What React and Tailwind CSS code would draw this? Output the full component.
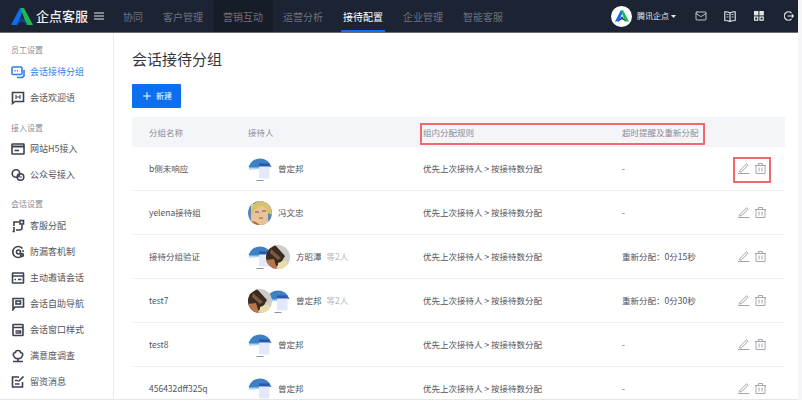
import React from "react";
import { Mail, Plus } from "lucide-react";

const font = { fontFamily: '"Noto Sans CJK SC", "Noto Sans", sans-serif' };

function Logo({ w = 22, h = 17 }) {
  return (
    <svg width={w} height={h} viewBox="0 0 22 17" className="shrink-0">
      <path d="M9 0 H13 L6.5 17 H0 Z" fill="#0c6ff0" />
      <path d="M9.5 0 H13 L22 17 H15.5 Z" fill="#1db954" />
      <path d="M5 17 L11 9 L17 17 L11 13.5 Z" fill="#14408f" />
    </svg>
  );
}

function AvatarBlue() {
  return (
    <svg width="24" height="24" viewBox="0 0 24 24" className="shrink-0">
      <path d="M0.5 10 A12 12 0 0 1 23.5 10 Z" fill="#3f7fc4" />
      <rect x="11" y="6.5" width="10.5" height="3" fill="#2a58ad" />
      <rect x="1" y="10" width="10" height="1.6" fill="#6ab2e4" />
      <rect x="0.5" y="11.6" width="7" height="1.2" fill="#bfe0f5" />
      <rect x="11" y="9.5" width="10.5" height="12" fill="#e3e9f8" />
      <rect x="8.5" y="23.2" width="7" height="0.8" fill="#777" />
    </svg>
  );
}

function AvatarBlond() {
  return (
    <svg width="24" height="24" viewBox="0 0 24 24" className="shrink-0">
      <defs><clipPath id="cb"><circle cx="12" cy="12" r="12" /></clipPath></defs>
      <g clipPath="url(#cb)">
        <rect width="24" height="24" fill="#5b87b5" />
        <rect x="3" y="3" width="17" height="21" fill="#e9c49b" />
        <path d="M3 13 Q3 2 12 0 Q24 0 24 14 L20 12 Q19 7 14 5 Q9 6 7 9 Q5 10 5 14 Z" fill="#d8c268" />
        <path d="M7 11 H11 M14 10 H18" stroke="#6b4a2a" strokeWidth="0.9" />
        <path d="M11 17 H15" stroke="#8a5a3a" strokeWidth="0.9" />
        <path d="M0 19 L8 21 L12 24 H0 Z" fill="#b5702f" />
      </g>
    </svg>
  );
}

function AvatarBrown() {
  return (
    <svg width="24" height="24" viewBox="0 0 24 24" className="shrink-0">
      <defs><clipPath id="cc"><circle cx="12" cy="12" r="12" /></clipPath></defs>
      <g clipPath="url(#cc)">
        <rect width="24" height="24" fill="#cdccc8" />
        <path d="M0 6 L9 0 L19 11 L16 16 L8 24 L0 24 Z" fill="#3b2a20" />
        <path d="M0 15 L8 14 L11 24 L0 24 Z" fill="#b9744a" />
        <path d="M5 4 L15 13 L12 15 L4 8 Z" fill="#7a5a42" />
        <path d="M12 18 L20 15 L24 24 L12 24 Z" fill="#e8dca8" />
      </g>
    </svg>
  );
}

function Av({ type }) {
  if (type === "blue") return <AvatarBlue />;
  if (type === "blond") return <AvatarBlond />;
  return <AvatarBrown />;
}

function SideIcon({ d, blue }) {
  const c = blue ? "#2f80ed" : "#3d4250";
  return (
    <svg width="14" height="14" viewBox="0 0 14 14" fill="none" stroke={c} strokeWidth="1.6" className="shrink-0">
      {d}
    </svg>
  );
}

const icons = {
  chat: (
    <>
      <rect x="1" y="2" width="10" height="7.5" rx="1" />
      <path d="M13 5 V11 L11 12.5 H6" />
      <path d="M3.5 5.7 H8.5" strokeDasharray="1.2 1.2" />
    </>
  ),
  hi: (
    <>
      <path d="M1.5 1.5 H12.5 V10.5 H4 L1.5 12.5 Z" />
      <path d="M5 4 V8 M5 6 H9 M9 4 V8" strokeWidth="1.1" />
    </>
  ),
  web: (
    <>
      <rect x="1" y="2" width="12" height="10" rx="0.5" />
      <path d="M1 4.5 H13" strokeWidth="2" />
      <path d="M3.5 8.5 H8" />
    </>
  ),
  wechat: (
    <>
      <circle cx="5" cy="5.5" r="3.8" />
      <circle cx="9.5" cy="9" r="3.3" />
      <path d="M8 9 H11" strokeWidth="1" />
    </>
  ),
  assign: (
    <>
      <rect x="9" y="1.5" width="3.5" height="3.5" />
      <path d="M8 3 H3 V7 M3 8 V12.5 H1.5 M11 6 V9 Q11 11 8 11 H5" />
    </>
  ),
  guard: (
    <>
      <path d="M11.5 3.5 A5.5 5.5 0 1 0 11.5 10.5" />
      <circle cx="7.5" cy="7" r="2" />
      <circle cx="11" cy="10" r="1.4" />
      <path d="M11 6 H13" />
    </>
  ),
  invite: (
    <>
      <rect x="1.5" y="2" width="11" height="10" rx="0.5" />
      <path d="M1.5 5 H12.5 M7 8.5 H10.5 M3.5 8.5 H5" />
    </>
  ),
  nav: (
    <>
      <path d="M2 1.5 H12.5 V10 H4 L2 12.5 Z" />
      <rect x="5" y="4" width="4.5" height="3" />
    </>
  ),
  style: (
    <>
      <rect x="2" y="1.5" width="10" height="11" rx="0.5" />
      <path d="M2 4.5 H12 M4.5 8 H9.5 V10 H4.5" />
    </>
  ),
  survey: (
    <>
      <path d="M7 1.5 Q9.5 1.5 9.5 3.5 Q12.5 4 11.5 6.5 Q10.5 9 9 9.5 H5 Q3.5 9 2.5 6.5 Q1.5 4 4.5 3.5 Q4.5 1.5 7 1.5 Z" />
      <path d="M2 12.5 H12 M7 9.5 V12.5" />
    </>
  ),
  msg: (
    <>
      <path d="M11.5 7 V12 H1.5 V2 H8" />
      <path d="M4 5.5 H7 M4 9 H8.5 M7.5 6.5 L12.5 1.5" />
    </>
  ),
};

const groups = [
  {
    title: "员工设置",
    gap: "mb-[11px]",
    head: "mb-[3px]",
    items: [
      ["chat", "会话接待分组", true],
      ["hi", "会话欢迎语"],
    ],
  },
  {
    title: "接入设置",
    gap: "mb-[10px]",
    head: "mb-[2px]",
    items: [
      ["web", "网站H5接入"],
      ["wechat", "公众号接入"],
    ],
  },
  {
    title: "会话设置",
    gap: "",
    head: "mb-[3px]",
    items: [
      ["assign", "客服分配"],
      ["guard", "防漏客机制"],
      ["invite", "主动邀请会话"],
      ["nav", "会话自助导航"],
      ["style", "会话窗口样式"],
      ["survey", "满意度调查"],
      ["msg", "留资消息"],
    ],
  },
];

const navs = ["协同", "客户管理", "营销互动", "运营分析", "接待配置", "企业管理", "智能客服"];

const rows = [
  { name: "b侧未响应", avs: ["blue"], who: "曾定邦", time: "-", boxed: true },
  { name: "yelena接待组", avs: ["blond"], who: "冯文忠", time: "-" },
  { name: "接待分组验证", avs: ["blue", "brown"], who: "方昭潭", more: "等2人", time: "重新分配：0分15秒" },
  { name: "test7", avs: ["brown", "blue"], who: "曾定邦", more: "等2人", time: "重新分配：0分30秒" },
  { name: "test8", avs: ["blue"], who: "曾定邦", time: "-" },
  { name: "456432dff325q", avs: ["blue"], who: "曾定邦", time: "-" },
];

function Actions() {
  return (
    <div className="flex items-center gap-[5px] text-[#a3a6ad]">
      <svg width="12" height="11" viewBox="0 0 12 11" fill="none" stroke="currentColor" strokeWidth="1">
        <path d="M2 7.5 L8.5 0.8 L10 2.2 L3.5 8.8 L1.5 9 Z" />
        <path d="M0 10.5 H11.5" />
      </svg>
      <svg width="11" height="11" viewBox="0 0 11 11" fill="none" stroke="currentColor" strokeWidth="1">
        <path d="M0 2.5 H11 M3.5 2.5 V0.5 H7.5 V2.5 M1 2.5 V10.5 H10 V2.5 M4 4.5 V8.5 M7 4.5 V8.5" />
      </svg>
    </div>
  );
}

export default function App() {
  return (
    <div style={font} className="w-[802px] h-[417px] bg-white overflow-hidden flex">
      <div className="w-[798px] h-[400px] flex flex-col overflow-hidden border-b border-[#e6e6e6] shrink-0">
        <header className="h-[33px] shrink-0 bg-[#1c2333] flex items-stretch border-b border-[#6b6f78]">
          <div className="w-[113px] flex items-center pl-[11px] shrink-0">
            <Logo />
            <span className="ml-[3px] text-[13px] font-medium text-[#eceef1]">企点客服</span>
            <svg width="10" height="8" viewBox="0 0 10 8" className="ml-[6px]" stroke="#e5e7eb" strokeWidth="1.2">
              <path d="M0 1 H10 M0 4 H10 M0 7 H10" />
            </svg>
          </div>
          <nav className="flex items-stretch text-[10px]">
            {navs.map((n, i) => (
              <div
                key={n}
                className={
                  "relative flex items-center px-[10px] " +
                  (i === 4 ? "text-white " : "text-[#6b7280] ") +
                  (i === 2 ? "bg-[#171c29] " : "")
                }
              >
                {n}
                {i === 4 && <div className="absolute left-[8px] right-[8px] bottom-0 h-[2px] bg-[#0c6ff0]" />}
              </div>
            ))}
          </nav>
          <div className="ml-auto flex items-center text-[#e5e7eb]">
            <div className="w-[21px] h-[21px] rounded-full bg-white flex items-center justify-center">
              <Logo w={14} h={12} />
            </div>
            <span className="ml-[5px] text-[8px] text-[#e5e7eb]">腾讯企点</span>
            <svg width="5" height="3" viewBox="0 0 5 3" className="ml-[2px]" fill="#e5e7eb"><path d="M0 0 H5 L2.5 3 Z" /></svg>
            <Mail size={12} strokeWidth={1.6} className="ml-[19px]" />
            <svg width="12" height="11" viewBox="0 0 12 11" className="ml-[17px]" fill="none" stroke="#e5e7eb" strokeWidth="1.1">
              <path d="M6 2 Q4 0.8 0.8 0.8 V9.5 Q4 9.5 6 10.5 Q8 9.5 11.2 9.5 V0.8 Q8 0.8 6 2 V10.5" />
              <path d="M2.5 3.5 H4.5 M2.5 6 H4.5 M7.5 3.5 H9.5 M7.5 6 H9.5" strokeWidth="0.8" />
            </svg>
            <svg width="10" height="10" viewBox="0 0 10 10" className="ml-[18px]" fill="none" stroke="#e5e7eb" strokeWidth="1.2">
              <rect x="0.6" y="0.6" width="3.2" height="3.2" fill="#e5e7eb" />
              <rect x="6" y="0.6" width="3.2" height="3.2" fill="#e5e7eb" />
              <rect x="0.6" y="6" width="3.2" height="3.2" />
              <rect x="6" y="6" width="3.2" height="3.2" />
            </svg>
            <svg width="10" height="10" viewBox="0 0 10 10" className="ml-[20px] mr-[4px]" fill="none" stroke="#e5e7eb" strokeWidth="1.2">
              <path d="M7.5 2 A4.2 4.2 0 1 0 7.5 8" />
              <path d="M3.5 5 H9.5 M7.8 3.3 L9.5 5 L7.8 6.7" />
            </svg>
          </div>
        </header>
        <div className="flex flex-1 min-h-0">
          <aside className="w-[114px] shrink-0 border-r border-[#ececec] pl-[11px] pt-[11px]">
            {groups.map((g) => (
              <div key={g.title} className={g.gap}>
                <div className={"h-[12px] leading-[12px] text-[8px] text-[#8a8d93] " + g.head}>{g.title}</div>
                {g.items.map(([ic, label, active]) => (
                  <div key={label} className="h-[26px] flex items-center">
                    <SideIcon d={icons[ic]} blue={active} />
                    <span className={"ml-[5px] text-[9px] " + (active ? "text-[#2f80ed]" : "text-[#50545c]")}>{label}</span>
                  </div>
                ))}
              </div>
            ))}
          </aside>
          <main className="flex-1 min-w-0 pl-[18px] pr-[13px]">
            <h1 className="text-[15px] leading-[20px] mt-[16px] text-[#33363c] font-normal">会话接待分组</h1>
            <button className="mt-[15px] w-[49px] h-[24px] rounded-[1px] bg-[#0c6ff0] text-white flex items-center justify-center gap-[3px] text-[8px]">
              <Plus size={12} strokeWidth={2} />
              新建
            </button>
            <div className="mt-[9px]">
              <div className="relative h-[30px] bg-[#f4f5f9] flex items-center text-[8.5px] text-[#8a8d93]">
                <div className="w-[116px] pl-[17px]">分组名称</div>
                <div className="w-[175px]">接待人</div>
                <div className="w-[199px]">组内分配规则</div>
                <div>超时提醒及重新分配</div>
                <div className="absolute left-[288px] top-[6px] w-[285px] h-[22px] border-2 border-[#f2686c]" />
              </div>
              {rows.map((r) => (
                <div key={r.name} className="h-[44px] flex items-center border-b border-[#f0f0f0] text-[8.5px] text-[#50545c] relative">
                  <div className="w-[116px] pl-[17px]">{r.name}</div>
                  <div className="w-[175px] flex items-center">
                    {r.avs.map((a, i) => (
                      <div key={i} className={(i ? "-ml-[6px] " : "") + (a === "brown" ? "relative z-10" : "")}>
                        <Av type={a} />
                      </div>
                    ))}
                    <span className="ml-[6px]">{r.who}</span>
                    {r.more && <span className="ml-[5px] text-[#b5b8be]">{r.more}</span>}
                  </div>
                  <div className="w-[199px]">优先上次接待人 &gt; 按接待数分配</div>
                  <div className="flex-1">{r.time}</div>
                  <div className="mr-[19px]"><Actions /></div>
                  {r.boxed && <div className="absolute left-[601px] top-[10px] w-[38px] h-[26px] border-2 border-[#f2686c]" />}
                </div>
              ))}
            </div>
          </main>
        </div>
      </div>
      <div className="flex-1 bg-[#f5f5f7] h-[400px]" />
    </div>
  );
}
